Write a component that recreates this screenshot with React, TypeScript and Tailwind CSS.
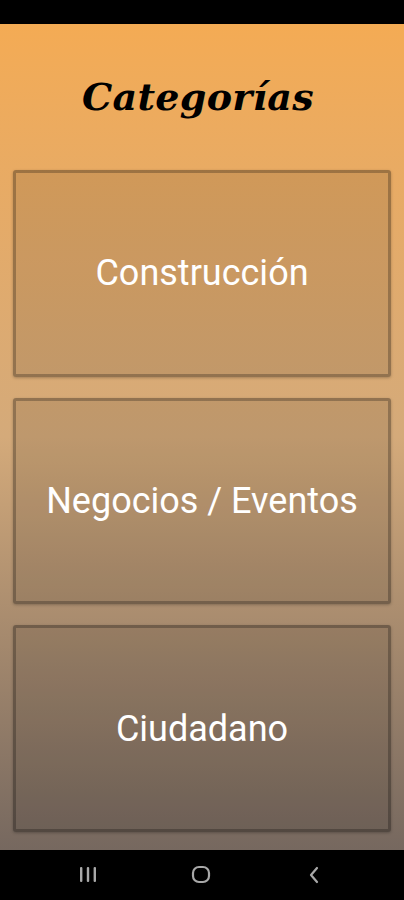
import React from 'react'

const categorias = ['Construcción', 'Negocios / Eventos', 'Ciudadano']

export default function App() {
  return (
    <div className="w-[404px] h-[900px] flex flex-col bg-black overflow-hidden">
      {/* barra de estado */}
      <div className="h-[24px] bg-black shrink-0" />

      <div className="flex-1 flex flex-col bg-linear-to-b from-[#f4ab54] via-[#d4aa7a] to-[#76685f] px-[13px] pb-[18px]">
        <h1 className="h-[146px] flex items-center justify-center pb-[2px] pr-[8px] text-black text-[38px] font-bold italic [font-family:'DejaVu_Serif',serif] tracking-[0.3px]">
          Categorías
        </h1>

        <div className="flex-1 flex flex-col gap-[21px]">
          {categorias.map((c) => (
            <button
              key={c}
              className="flex-1 flex items-center justify-center rounded-[3px] border-[3px] border-black/25 bg-black/10 shadow-[0_1px_3px_rgba(0,0,0,0.25)] text-white text-[36px] [font-family:Roboto,sans-serif]"
            >
              {c}
            </button>
          ))}
        </div>
      </div>

      {/* barra de navegacion */}
      <div className="h-[50px] bg-black shrink-0 flex items-center gap-[93px] pl-[78px]">
        <svg width="20" height="20" viewBox="0 0 20 20" className="text-[#a8a8a8]">
          <g fill="currentColor">
            <rect x="2" y="2" width="2.4" height="15" rx="1" />
            <rect x="8.8" y="2" width="2.4" height="15" rx="1" />
            <rect x="15.6" y="2" width="2.4" height="15" rx="1" />
          </g>
        </svg>
        <svg width="20" height="22" viewBox="0 0 20 22" className="text-[#a8a8a8]">
          <rect x="2" y="3" width="16" height="15" rx="6" fill="none" stroke="currentColor" strokeWidth="2.2" />
        </svg>
        <svg width="20" height="20" viewBox="0 0 20 20" className="text-[#a8a8a8]">
          <path d="M13 3 L7 10 L13 17" fill="none" stroke="currentColor" strokeWidth="2.2" strokeLinecap="round" strokeLinejoin="round" />
        </svg>
      </div>
    </div>
  )
}
